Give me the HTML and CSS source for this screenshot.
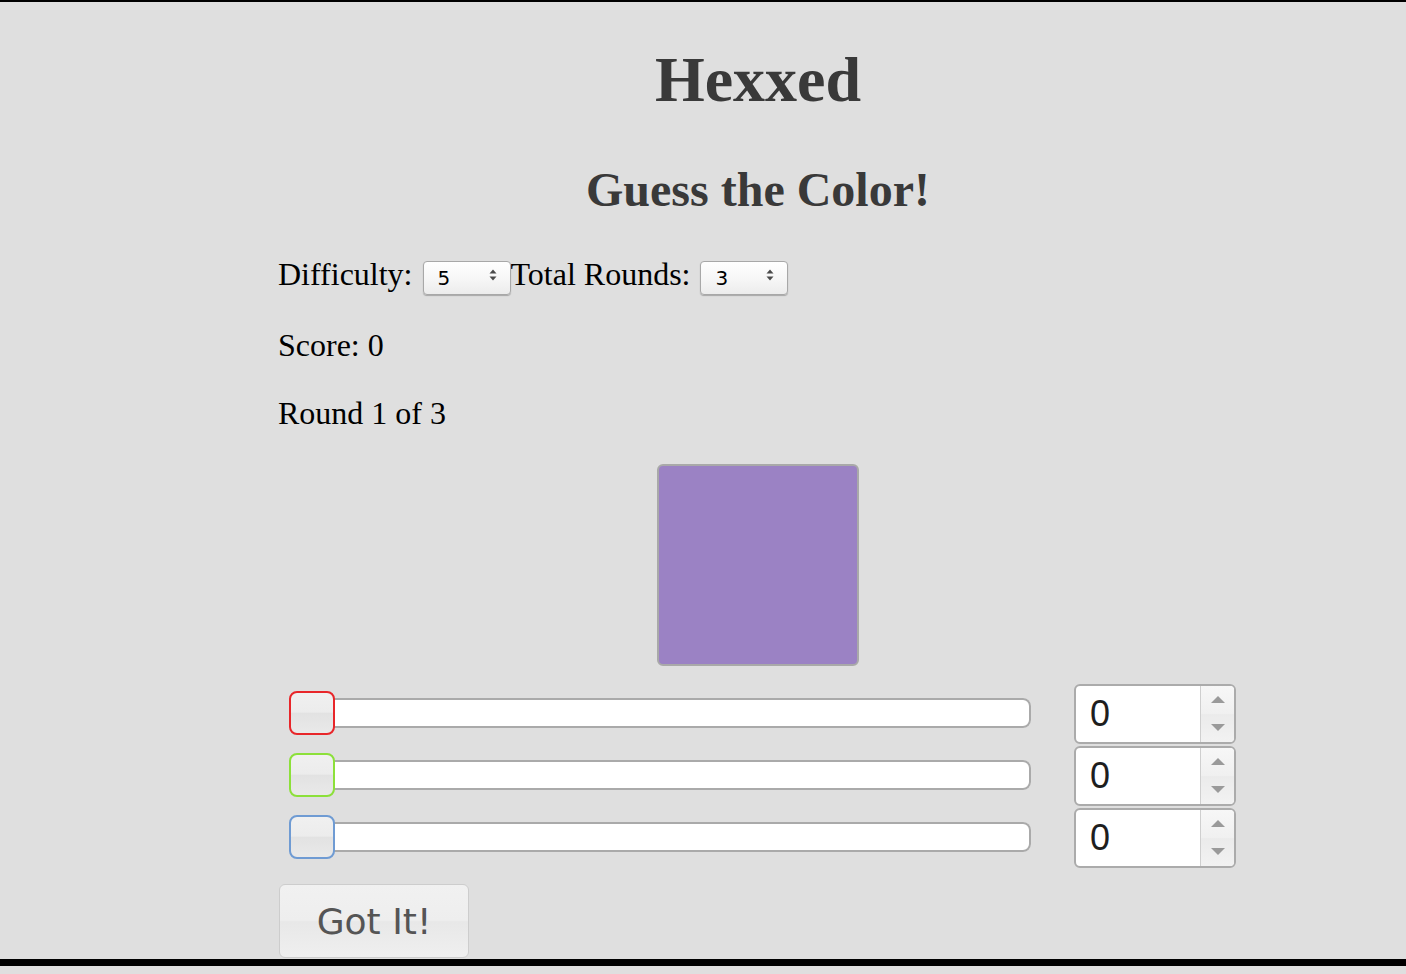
FILE: index.html
```html
<!DOCTYPE html>
<html lang="en">
<head>
<meta charset="utf-8">
<title>Hexxed</title>
<link rel="stylesheet" href="styles.css">
</head>
<body>
<div class="frame">
  <main class="page">
    <h1 class="title">Hexxed</h1>
    <h2 class="subtitle">Guess the Color!</h2>
    <div class="settings">Difficulty: <span class="select"><select class="select-input"><option>5</option></select><svg class="select-arrows" width="8" height="12" viewBox="0 0 8 12"><path d="M4 0.5 L7.5 4.5 L0.5 4.5 Z M4 11.5 L7.5 7.5 L0.5 7.5 Z" fill="#4a4a4a"/></svg></span>Total Rounds: <span class="select"><select class="select-input"><option>3</option></select><svg class="select-arrows" width="8" height="12" viewBox="0 0 8 12"><path d="M4 0.5 L7.5 4.5 L0.5 4.5 Z M4 11.5 L7.5 7.5 L0.5 7.5 Z" fill="#4a4a4a"/></svg></span></div>
    <p class="info">Score: 0</p>
    <p class="info info-round">Round 1 of 3</p>
    <div class="swatch"></div>
    <div class="channels">
      <div class="channel">
        <input class="slider slider-red" type="range" min="0" max="255" value="0">
        <div class="num"><input class="num-input" type="text" value="0"><div class="spin"><span class="tri tri-up"></span><span class="tri tri-down"></span></div></div>
      </div>
      <div class="channel">
        <input class="slider slider-green" type="range" min="0" max="255" value="0">
        <div class="num"><input class="num-input" type="text" value="0"><div class="spin"><span class="tri tri-up"></span><span class="tri tri-down"></span></div></div>
      </div>
      <div class="channel">
        <input class="slider slider-blue" type="range" min="0" max="255" value="0">
        <div class="num"><input class="num-input" type="text" value="0"><div class="spin"><span class="tri tri-up"></span><span class="tri tri-down"></span></div></div>
      </div>
    </div>
    <button class="submit" type="button">Got It!</button>
  </main>
</div>
</body>
</html>
```
FILE: styles.css
```css
html, body {
  margin: 0;
  padding: 0;
  background: #dfdfdf;
}

.frame {
  border-top: 2px solid #000;
  border-bottom: 7px solid #000;
  height: 957px;
  overflow: hidden;
}

.page {
  width: 960px;
  margin-left: 278px;
  font-family: "Liberation Serif", "Times New Roman", serif;
  font-size: 32px;
  color: #000;
}

.title {
  margin: 42px 0 0;
  font-size: 64px;
  line-height: 72px;
  font-weight: bold;
  color: #393939;
  text-align: center;
}

.subtitle {
  margin: 47px 0 0;
  font-size: 48px;
  line-height: 54px;
  font-weight: bold;
  color: #393939;
  text-align: center;
}

.settings {
  margin-top: 37px;
  line-height: 40px;
}

.select {
  position: relative;
  display: inline-block;
  margin-left: 2px;
}

.select-input {
  -webkit-appearance: none;
  appearance: none;
  box-sizing: border-box;
  width: 88px;
  height: 34px;
  margin: 0;
  padding: 0 0 0 14px;
  border: 1px solid #a8a8a8;
  border-radius: 4px;
  background: linear-gradient(#ffffff 0%, #f7f7f7 50%, #ececec 100%);
  box-shadow: 0 1px 1px rgba(0,0,0,0.25);
  font-family: "DejaVu Sans", "Liberation Sans", sans-serif;
  font-size: 20px;
  color: #000;
}

.select-arrows {
  position: absolute;
  right: 14px;
  top: 50%;
  margin-top: -6px;
  pointer-events: none;
}

.info {
  margin: 32px 0 0;
  line-height: 37px;
}

.info-round {
  margin-top: 31px;
}

.swatch {
  width: 198px;
  height: 198px;
  margin: 32px auto 0;
  border: 2px solid #a9a9a9;
  border-radius: 6px;
  background: #9b82c4;
}

.channels {
  margin-top: 18px;
  display: flex;
  flex-direction: column;
  gap: 2px;
}

.channel {
  display: flex;
  align-items: center;
  height: 60px;
}

.slider {
  -webkit-appearance: none;
  appearance: none;
  width: 742px;
  height: 44px;
  margin: -2px 43px 0 11px;
  padding: 0;
  background: transparent;
}

.slider::-webkit-slider-runnable-track {
  height: 30px;
  border: none;
  border-radius: 8px;
  background: #fff;
  box-shadow: inset 0 0 0 2px #aaaaaa;
}

.slider::-webkit-slider-thumb {
  -webkit-appearance: none;
  appearance: none;
  box-sizing: border-box;
  width: 46px;
  height: 44px;
  margin-top: -7px;
  border: 2px solid #aaa;
  border-radius: 8px;
  background: linear-gradient(#f0f0f0 0%, #ececec 48%, #e2e2e2 50%, #e9e9e9 100%);
}

.slider-red::-webkit-slider-thumb { border-color: #e8262a; }
.slider-green::-webkit-slider-thumb { border-color: #8ce03a; }
.slider-blue::-webkit-slider-thumb { border-color: #6f9bd3; }

.num {
  box-sizing: border-box;
  width: 162px;
  height: 60px;
  display: flex;
  border: 2px solid #ababab;
  border-radius: 6px;
  background: #fff;
  overflow: hidden;
}

.num-input {
  flex: 1;
  min-width: 0;
  border: none;
  outline: none;
  margin: 0;
  padding: 0 0 0 14px;
  background: transparent;
  font-family: "Liberation Sans", Arial, sans-serif;
  font-size: 36px;
  color: #1e1e1e;
}

.spin {
  width: 33px;
  border-left: 1px solid #cfcfcf;
  background: linear-gradient(#f7f7f7 0%, #f0f0f0 50%, #ebebeb 51%, #f2f2f2 100%);
  display: flex;
  flex-direction: column;
  align-items: center;
  justify-content: space-between;
  padding: 10px 0 11px;
}

.tri {
  width: 0;
  height: 0;
  border-left: 7px solid transparent;
  border-right: 7px solid transparent;
}

.tri-up { border-bottom: 7px solid #9a9a9a; }
.tri-down { border-top: 7px solid #9a9a9a; }

.submit {
  display: block;
  box-sizing: border-box;
  width: 190px;
  height: 74px;
  margin: 16px 0 0 1px;
  padding: 0;
  border: 1px solid #cdcdcd;
  border-radius: 6px;
  background: linear-gradient(#f1f1f1 0%, #eeeeee 49%, #e8e8e8 51%, #efefef 100%);
  font-family: "DejaVu Sans", "Liberation Sans", sans-serif;
  font-size: 36px;
  color: #555;
}
```
